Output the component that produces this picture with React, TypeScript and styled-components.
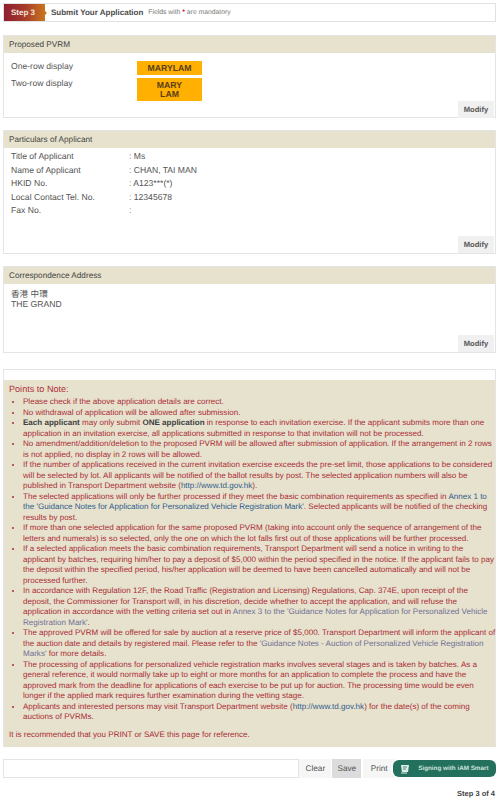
import React from 'react';
import styled, {createGlobalStyle} from 'styled-components';

const GlobalStyle = createGlobalStyle`
  html, body {
    margin: 0;
    padding: 0;
    background: #fff;
  }
  body {
    font-family: "Liberation Sans", Arial, "Noto Sans CJK TC", sans-serif;
    color: #444;
    text-rendering: geometricPrecision;
  }
  button {
    text-rendering: geometricPrecision;
  }
`;

const Page = styled.div`
  width: 503px;
  height: 804px;
  padding: 3px 7px 0 3px;
  box-sizing: border-box;
  overflow: hidden;
`;

const StepBar = styled.div`
  display: flex;
  align-items: center;
  height: 19px;
  border: 1px solid #e2e2e2;
  box-sizing: border-box;
  margin-bottom: 13px;
`;

const StepBadge = styled.div`
  position: relative;
  width: 41px;
  height: 17px;
  line-height: 17px;
  padding-left: 7px;
  box-sizing: border-box;
  background: linear-gradient(90deg, #8e1f2f 0%, #a63a2a 50%, #c9761f 100%);
  color: #f3e6dc;
  font-size: 8px;
  font-weight: bold;
  &:after {
    content: '';
    position: absolute;
    right: -2px;
    top: 7px;
    border-left: 2px solid #c9761f;
    border-top: 2px solid transparent;
    border-bottom: 2px solid transparent;
  }
`;

const StepTitle = styled.div`
  margin-left: 6px;
  font-size: 8px;
  font-weight: bold;
  color: #4a4a4a;
`;

const StepHint = styled.div`
  margin-left: 5px;
  font-size: 6.8px;
  color: #777;
  b {
    color: #c00;
  }
`;

const Card = styled.section<{$height: number}>`
  display: flex;
  flex-direction: column;
  height: ${props => props.$height}px;
  border: 1px solid #e4e4e4;
  box-sizing: border-box;
  margin-bottom: 12px;
`;

const CardHeader = styled.div`
  height: 17px;
  flex: none;
  line-height: 17px;
  padding-left: 5px;
  background: #e7e2cd;
  font-size: 8.2px;
  color: #444;
`;

const CardBody = styled.div`
  flex: 1;
  padding-left: 7px;
  font-size: 8.6px;
`;

const CardFooter = styled.div`
  display: flex;
  justify-content: flex-end;
  padding-right: 1px;
`;

const ModifyButton = styled.button`
  width: 36px;
  height: 17px;
  border: none;
  padding: 0;
  background: #f0f0f0;
  font: bold 7.6px "Liberation Sans", Arial, sans-serif;
  color: #555;
`;

const PlateGrid = styled.div`
  display: grid;
  grid-template-columns: 126px 65px;
  row-gap: 3px;
  padding-top: 8px;
  color: #555;
`;

const Plate = styled.div`
  background: #ffb000;
  text-align: center;
  font-size: 8.7px;
  font-weight: bold;
  line-height: 9px;
  color: #5a4018;
  padding: 2.5px 0;
`;

const InfoRow = styled.div`
  display: grid;
  grid-template-columns: 118px 1fr;
  height: 13.5px;
  line-height: 13.5px;
  color: #555;
`;

const Details = styled.div`
  padding-top: 2px;
`;

const Address = styled.div`
  padding-top: 5px;
  line-height: 10px;
  color: #555;
`;

const NotesBox = styled.section`
  border: 1px solid #e4e4e4;
  border-bottom: none;
  margin-top: 16px;
  padding-top: 10px;
  margin-bottom: 12px;
`;

const NotesBody = styled.div`
  background: #e7e2cd;
  padding: 4px 0 3px 5px;
  height: 367px;
  box-sizing: border-box;
  color: #a92b36;
  font-size: 8.05px;
  line-height: 10.5px;
`;

const NotesTitle = styled.div`
  font-size: 9.1px;
  line-height: 11px;
  margin-bottom: 2px;
  color: #b03039;
`;

const NotesList = styled.ul`
  margin: 0 -2px 0 0;
  padding: 0 0 0 14px;
  list-style: disc;
  li::marker {
    font-size: 8px;
  }
`;

const Strong = styled.strong`
  color: #3f3f3f;
`;

const NoteLink = styled.a<{$muted?: boolean}>`
  color: ${props => (props.$muted ? '#6f6f96' : '#2e5a8c')};
  text-decoration: none;
`;

const Reminder = styled.p`
  margin: 7px 0 0;
`;

const ActionBar = styled.div`
  display: flex;
  align-items: stretch;
  height: 19px;
`;

const Spacer = styled.div`
  width: 297px;
  border: 1px solid #e4e4e4;
  box-sizing: border-box;
`;

const ActionButton = styled.button<{$active?: boolean}>`
  width: ${props => (props.$active ? 29 : 32)}px;
  border: none;
  padding: 0;
  margin-right: ${props => (props.$active ? 2 : 1)}px;
  background: ${props => (props.$active ? '#dcdcdc' : '#f6f6f6')};
  font: 8.2px "Liberation Sans", Arial, sans-serif;
  color: #555;
`;

const SmartButton = styled.button`
  display: flex;
  align-items: center;
  gap: 8px;
  width: 103px;
  height: 17px;
  margin-top: 1px;
  margin-left: -3px;
  padding: 0 0 0 7px;
  border: none;
  border-radius: 6px;
  background: #24705e;
  color: #cfe3dc;
  font: bold 6.3px "Liberation Sans", Arial, sans-serif;
  white-space: nowrap;
`;

const PageCount = styled.div`
  margin-top: 11px;
  padding-right: 1px;
  text-align: right;
  font-size: 7.5px;
  font-weight: bold;
  color: #444;
`;

const SmartIcon = () => (
    <svg width="10" height="10" viewBox="0 0 10 10">
        <path d="M1 1h8L8 8H2z" fill="#dcefe8" />
        <path d="M3 3h4M3 5h3" stroke="#24705e" strokeWidth="0.8" />
        <path d="M1 9h6" stroke="#dcefe8" strokeWidth="1" />
    </svg>
);

const App: React.FC = () => {
    return (
        <Page>
            <GlobalStyle />
            <StepBar>
                <StepBadge>Step 3</StepBadge>
                <StepTitle>Submit Your Application</StepTitle>
                <StepHint>Fields with <b>*</b> are mandatory</StepHint>
            </StepBar>

            <Card $height={83}>
                <CardHeader>Proposed PVRM</CardHeader>
                <CardBody>
                    <PlateGrid>
                        <span>One-row display</span>
                        <Plate>MARYLAM</Plate>
                        <span>Two-row display</span>
                        <Plate>MARY<br />LAM</Plate>
                    </PlateGrid>
                </CardBody>
                <CardFooter><ModifyButton>Modify</ModifyButton></CardFooter>
            </Card>

            <Card $height={124}>
                <CardHeader>Particulars of Applicant</CardHeader>
                <CardBody>
                    <Details>
                        <InfoRow><span>Title of Applicant</span><span>: Ms</span></InfoRow>
                        <InfoRow><span>Name of Applicant</span><span>: CHAN, TAI MAN</span></InfoRow>
                        <InfoRow><span>HKID No.</span><span>: A123***(*)</span></InfoRow>
                        <InfoRow><span>Local Contact Tel. No.</span><span>: 12345678</span></InfoRow>
                        <InfoRow><span>Fax No.</span><span>:</span></InfoRow>
                    </Details>
                </CardBody>
                <CardFooter><ModifyButton>Modify</ModifyButton></CardFooter>
            </Card>

            <Card $height={87}>
                <CardHeader>Correspondence Address</CardHeader>
                <CardBody>
                    <Address>香港 中環<br />THE GRAND</Address>
                </CardBody>
                <CardFooter><ModifyButton>Modify</ModifyButton></CardFooter>
            </Card>

            <NotesBox>
                <NotesBody>
                    <NotesTitle>Points to Note:</NotesTitle>
                    <NotesList>
                        <li>Please check if the above application details are correct.</li>
                        <li>No withdrawal of application will be allowed after submission.</li>
                        <li><Strong>Each applicant</Strong> may only submit <Strong>ONE application</Strong> in response to each invitation exercise. If the applicant submits more than one application in an invitation exercise, all applications submitted in response to that invitation will not be processed.</li>
                        <li>No amendment/addition/deletion to the proposed PVRM will be allowed after submission of application. If the arrangement in 2 rows is not applied, no display in 2 rows will be allowed.</li>
                        <li>If the number of applications received in the current invitation exercise exceeds the pre-set limit, those applications to be considered will be selected by lot. All applicants will be notified of the ballot results by post. The selected application numbers will also be published in Transport Department website (<NoteLink href="#">http://www.td.gov.hk</NoteLink>).</li>
                        <li>The selected applications will only be further processed if they meet the basic combination requirements as specified in <NoteLink href="#">Annex 1 to the 'Guidance Notes for Application for Personalized Vehicle Registration Mark'</NoteLink>. Selected applicants will be notified of the checking results by post.</li>
                        <li>If more than one selected application for the same proposed PVRM (taking into account only the sequence of arrangement of the letters and numerals) is so selected, only the one on which the lot falls first out of those applications will be further processed.</li>
                        <li>If a selected application meets the basic combination requirements, Transport Department will send a notice in writing to the applicant by batches, requiring him/her to pay a deposit of $5,000 within the period specified in the notice. If the applicant fails to pay the deposit within the specified period, his/her application will be deemed to have been cancelled automatically and will not be processed further.</li>
                        <li>In accordance with Regulation 12F, the Road Traffic (Registration and Licensing) Regulations, Cap. 374E, upon receipt of the deposit, the Commissioner for Transport will, in his discretion, decide whether to accept the application, and will refuse the application in accordance with the vetting criteria set out in <NoteLink href="#" $muted>Annex 3 to the 'Guidance Notes for Application for Personalized Vehicle Registration Mark'</NoteLink>.</li>
                        <li>The approved PVRM will be offered for sale by auction at a reserve price of $5,000. Transport Department will inform the applicant of the auction date and details by registered mail. Please refer to the <NoteLink href="#" $muted>'Guidance Notes - Auction of Personalized Vehicle Registration Marks'</NoteLink> for more details.</li>
                        <li>The processing of applications for personalized vehicle registration marks involves several stages and is taken by batches. As a general reference, it would normally take up to eight or more months for an application to complete the process and have the approved mark from the deadline for applications of each exercise to be put up for auction. The processing time would be even longer if the applied mark requires further examination during the vetting stage.</li>
                        <li>Applicants and interested persons may visit Transport Department website (<NoteLink href="#">http://www.td.gov.hk</NoteLink>) for the date(s) of the coming auctions of PVRMs.</li>
                    </NotesList>
                    <Reminder>It is recommended that you PRINT or SAVE this page for reference.</Reminder>
                </NotesBody>
            </NotesBox>

            <ActionBar>
                <Spacer />
                <ActionButton>Clear</ActionButton>
                <ActionButton $active>Save</ActionButton>
                <ActionButton>Print</ActionButton>
                <SmartButton><SmartIcon />Signing with iAM Smart</SmartButton>
            </ActionBar>
            <PageCount>Step 3 of 4</PageCount>
        </Page>
    );
};

export default App;
